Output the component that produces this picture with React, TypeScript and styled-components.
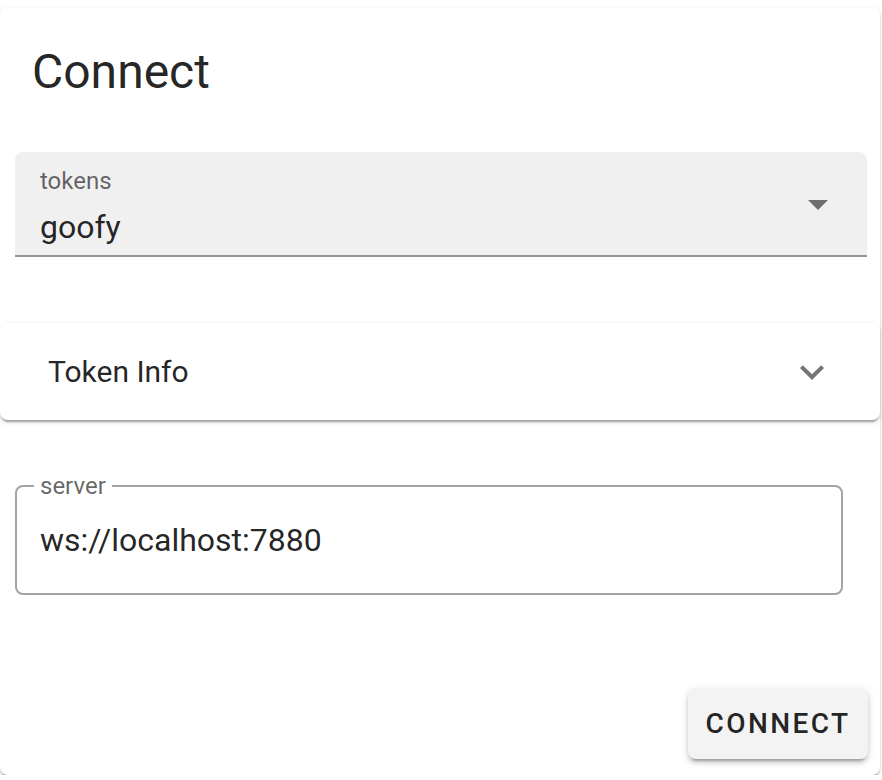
import React from "react";
import styled, { createGlobalStyle } from "styled-components";

const GlobalStyle = createGlobalStyle`
    body {
        margin: 0;
        background: #ffffff;
        font-family: Roboto, "Liberation Sans", sans-serif;
        color: rgba(0, 0, 0, 0.87);
    }
`;

const Page = styled.div`
    padding-top: 8px;
    width: 882px;
    overflow: hidden;
`;

const Card = styled.div`
    width: 880px;
    background: #fff;
    border-radius: 8px;
    box-shadow: 0px 4px 2px -2px rgba(0, 0, 0, 0.2),
        0px 2px 2px 0px rgba(0, 0, 0, 0.14), 0px 2px 6px 0px rgba(0, 0, 0, 0.12);
    display: flex;
    flex-direction: column;
    padding: 32px 0 16px;
    box-sizing: border-box;
`;

const Title = styled.h1`
    margin: 0 0 0 32px;
    font-size: 48px;
    line-height: 64px;
    font-weight: 400;
`;

const FilledSelect = styled.div`
    margin: 48px 0 0 15px;
    width: 852px;
    height: 105px;
    box-sizing: border-box;
    background: #f0f0f0;
    border-radius: 8px 8px 0 0;
    border-bottom: 2px solid #949494;
    display: flex;
    padding: 0 25px;
`;

const SelectText = styled.div`
    flex: 1;
    display: flex;
    flex-direction: column;
    padding-top: 15px;
`;

const SmallLabel = styled.span`
    font-size: 24px;
    line-height: 28px;
    color: rgba(0, 0, 0, 0.6);
`;

const Value = styled.span`
    margin-top: 9px;
    font-size: 32px;
    line-height: 46px;
`;

const Accordion = styled.div`
    margin-top: 66px;
    height: 97px;
    border-radius: 8px;
    background: #fff;
    box-shadow: 0px 4px 2px -2px rgba(0, 0, 0, 0.2),
        0px 2px 2px 0px rgba(0, 0, 0, 0.14), 0px 2px 6px 0px rgba(0, 0, 0, 0.12);
    display: flex;
    align-items: center;
    padding: 0 44px 0 48px;
`;

const AccordionTitle = styled.span`
    flex: 1;
    font-size: 30px;
`;

const OutlinedField = styled.fieldset`
    margin: 56px 0 0 15px;
    width: 828px;
    height: 119px;
    box-sizing: border-box;
    border: 2px solid #a3a3a3;
    border-radius: 8px;
    padding: 0 23px;
`;

const Legend = styled.legend`
    padding: 0 6px;
    margin-left: -6px;
    font-size: 24px;
    line-height: 20px;
    color: rgba(0, 0, 0, 0.6);
`;

const FieldValue = styled.div`
    font-size: 32px;
    line-height: 46px;
    margin-top: 21px;
`;

const Actions = styled.div`
    display: flex;
    justify-content: flex-end;
    margin-top: 93px;
    padding-right: 12px;
`;

const Button = styled.button`
    width: 180px;
    height: 71px;
    border: none;
    border-radius: 8px;
    background: #f3f3f3;
    box-shadow: 0px 6px 2px -4px rgba(0, 0, 0, 0.2),
        0px 4px 4px 0px rgba(0, 0, 0, 0.14), 0px 2px 10px 0px rgba(0, 0, 0, 0.12);
    font-family: Roboto, "Liberation Sans", sans-serif;
    font-size: 28px;
    font-weight: 500;
    letter-spacing: 2.4px;
    color: rgba(0, 0, 0, 0.87);
    padding: 0;
`;

const Icon = styled.svg`
    fill: rgba(0, 0, 0, 0.54);
    flex-shrink: 0;
    align-self: center;
`;

export default function App() {
    return (
        <Page>
            <GlobalStyle />
            <Card>
                <Title>Connect</Title>
                <FilledSelect>
                    <SelectText>
                        <SmallLabel>tokens</SmallLabel>
                        <Value>goofy</Value>
                    </SelectText>
                    <Icon width="48" height="48" viewBox="0 0 24 24">
                        <path d="M7 10l5 5 5-5z" />
                    </Icon>
                </FilledSelect>
                <Accordion>
                    <AccordionTitle>Token Info</AccordionTitle>
                    <Icon width="48" height="48" viewBox="0 0 24 24">
                        <path d="M16.59 8.59 12 13.17 7.41 8.59 6 10l6 6 6-6z" />
                    </Icon>
                </Accordion>
                <OutlinedField>
                    <Legend>server</Legend>
                    <FieldValue>ws://localhost:7880</FieldValue>
                </OutlinedField>
                <Actions>
                    <Button>CONNECT</Button>
                </Actions>
            </Card>
        </Page>
    );
}
